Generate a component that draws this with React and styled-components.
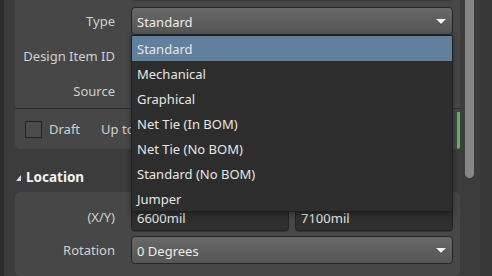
import React from 'react'
import styled, { createGlobalStyle } from 'styled-components'

const GlobalStyle = createGlobalStyle`
  html, body {
    margin: 0;
    padding: 0;
    background: #3c3c3c;
    overflow: hidden;
  }
  body {
    font-family: "Noto Sans", "Open Sans", sans-serif;
    font-size: 13px;
  }
`

const Panel = styled.div`
  display: flex;
  margin-top: -28px;
  height: 304px;
  border-left: 4px solid #2c2c2c;
  background: #3c3c3c;
`

const Content = styled.div`
  flex: 1;
  display: flex;
  flex-direction: column;
  padding: 0 5px 0 11px;
`

const Card = styled.div`
  position: relative;
  background: #474747;
  border-radius: 5px;
  padding: ${p => p.$pad || '0'};
`

const Rows = styled.div`
  display: flex;
  flex-direction: column;
  gap: ${p => p.$gap}px;
  padding-right: 7px;
`

const Row = styled.div`
  display: flex;
  align-items: center;
  height: 28px;
`

const Label = styled.div`
  flex-shrink: 0;
  width: 100px;
  margin-right: 16px;
  text-align: right;
  color: #d0d0d0;
`

const Control = styled.div`
  position: relative;
  flex: 1;
  display: flex;
  gap: 6px;
  height: 100%;
`

const Select = styled.div`
  flex: 1;
  box-sizing: border-box;
  display: flex;
  align-items: center;
  justify-content: space-between;
  padding: 1px 6px 0 5px;
  border: 1px solid #262626;
  border-radius: 4px;
  background: linear-gradient(#686868, #555555);
  color: #ececec;
`

const Field = styled.div`
  flex: 1;
  box-sizing: border-box;
  display: flex;
  align-items: center;
  padding: 1px 5px 0;
  border: 1px solid #232323;
  border-radius: 4px;
  background: #2f2f2f;
  box-shadow: 0 1px 0 rgba(0, 0, 0, 0.25);
  color: #e4e4e4;
`

const Menu = styled.div`
  position: absolute;
  top: 100%;
  left: 0;
  right: 0;
  z-index: 10;
  background: #2d2d2d;
  border: 1px solid #1f1f1f;
  box-shadow: 0 2px 6px rgba(0, 0, 0, 0.35);
`

const MenuItem = styled.div`
  height: 25px;
  line-height: 27px;
  padding: 0 5px;
  color: #e6e6e6;
  background: ${p => (p.$active ? '#61809e' : 'transparent')};
`

const CheckRow = styled.div`
  display: flex;
  align-items: center;
  height: 40px;
  margin-top: 3px;
  padding-left: 10px;
  border-top: 1px solid #2e2e2e;
  color: #d0d0d0;
`

const Checkbox = styled.div`
  width: 17px;
  height: 17px;
  box-sizing: border-box;
  margin-right: 7px;
  border: 1px solid #222;
  background: #4c4c4c;
`

const CheckText = styled.span`
  margin-right: ${p => p.$gap || 0}px;
`

const Status = styled.div`
  align-self: stretch;
  width: 3px;
  margin: 3px 0 0 auto;
  border-radius: 0 0 4px 2px;
  background: #5cb85c;
`

const SectionHeader = styled.div`
  box-sizing: border-box;
  height: 44px;
  display: flex;
  align-items: flex-end;
  gap: 5px;
  padding: 0 0 6px 1px;
  color: #f2f2f2;
  font-weight: 700;
  font-size: 13.5px;
  line-height: 18px;
  svg {
    margin-bottom: 5px;
  }
`

const Track = styled.div`
  width: 15px;
  background: #3c3c3c;
`

const Thumb = styled.div`
  width: 9px;
  height: 206px;
  border-radius: 0 0 5px 5px;
  background: #878787;
`

const Edge = styled.div`
  width: 12px;
  background: #383838;
`

const Arrow = () => (
  <svg width="10" height="6" viewBox="0 0 10 6">
    <polygon points="0,1 10,1 5,6" fill="#1e1e1e" opacity="0.4" />
    <polygon points="0,0 10,0 5,5" fill="#f4f4f4" />
  </svg>
)

const items = [
  'Standard',
  'Mechanical',
  'Graphical',
  'Net Tie (In BOM)',
  'Net Tie (No BOM)',
  'Standard (No BOM)',
  'Jumper',
]

export default function App() {
  return (
    <>
      <GlobalStyle />
      <Panel>
        <Content>
          <Card>
            <Rows $gap={7}>
              <Row>
                <Label />
                <Control>
                  <Field />
                </Control>
              </Row>
              <Row>
                <Label>Type</Label>
                <Control>
                  <Select>
                    <span>Standard</span>
                    <Arrow />
                  </Select>
                  <Menu>
                    {items.map((item, i) => (
                      <MenuItem key={item} $active={i === 0}>{item}</MenuItem>
                    ))}
                  </Menu>
                </Control>
              </Row>
              <Row>
                <Label>Design Item ID</Label>
                <Control>
                  <Field />
                </Control>
              </Row>
              <Row>
                <Label>Source</Label>
                <Control>
                  <Field />
                </Control>
              </Row>
            </Rows>
            <CheckRow>
              <Checkbox />
              <CheckText $gap={21}>Draft</CheckText>
              <CheckText>Up to date</CheckText>
              <Status />
            </CheckRow>
          </Card>
          <SectionHeader>
            <svg width="5" height="6" viewBox="0 0 5 6">
              <polygon points="5,0 5,6 0,6" fill="#dcdcdc" />
            </svg>
            Location
          </SectionHeader>
          <Card $pad="11px 0 12px 0">
            <Rows $gap={5}>
              <Row>
                <Label>(X/Y)</Label>
                <Control>
                  <Field>6600mil</Field>
                  <Field>7100mil</Field>
                </Control>
              </Row>
              <Row>
                <Label>Rotation</Label>
                <Control>
                  <Select>
                    <span>0 Degrees</span>
                    <Arrow />
                  </Select>
                </Control>
              </Row>
            </Rows>
          </Card>
        </Content>
        <Track>
          <Thumb />
        </Track>
        <Edge />
      </Panel>
    </>
  )
}
